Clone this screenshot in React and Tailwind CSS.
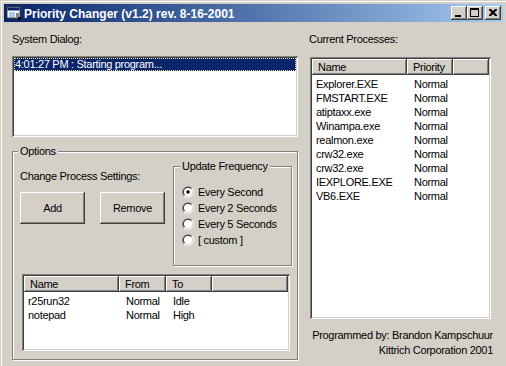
const raised =
  'shadow-[inset_-1px_-1px_0_#404040,inset_1px_1px_0_#ffffff,inset_-2px_-2px_0_#808080]';
const sunken =
  'shadow-[inset_1px_1px_0_#808080,inset_-1px_-1px_0_#ffffff,inset_2px_2px_0_#404040,inset_-2px_-2px_0_#d4d0c8]';
const etched = 'border border-[#808080] shadow-[inset_1px_1px_0_#ffffff,1px_1px_0_#ffffff]';

const processes = [
  'Explorer.EXE',
  'FMSTART.EXE',
  'atiptaxx.exe',
  'Winampa.exe',
  'realmon.exe',
  'crw32.exe',
  'crw32.exe',
  'IEXPLORE.EXE',
  'VB6.EXE',
];

const changes = [
  { name: 'r25run32', from: 'Normal', to: 'Idle' },
  { name: 'notepad', from: 'Normal', to: 'High' },
];

const frequencies = ['Every Second', 'Every 2 Seconds', 'Every 5 Seconds', '[ custom ]'];

function AppIcon() {
  return (
    <svg width="16" height="16" viewBox="0 0 16 16">
      <rect x="1" y="2" width="13" height="11" fill="#ffffff" stroke="#404040" />
      <rect x="1.5" y="2.5" width="12" height="3" fill="#0a246a" />
      <path d="M3 7h6v5H3z" fill="#a6caf0" />
      <path d="M10 8h3v4h-3z" fill="#808080" />
      <rect x="12" y="12" width="3" height="3" fill="#000000" />
    </svg>
  );
}

function CaptionButton({ kind }) {
  return (
    <div className={`flex h-[14px] w-[16px] items-center justify-center bg-[#d4d0c8] ${raised}`}>
      <svg width="16" height="14" viewBox="0 0 16 14">
        {kind === 'min' && <rect x="4" y="9" width="6" height="2" fill="#000" />}
        {kind === 'max' && (
          <>
            <rect x="3.5" y="2.5" width="8" height="8" fill="none" stroke="#000" />
            <rect x="3" y="2" width="9" height="2" fill="#000" />
          </>
        )}
        {kind === 'close' && (
          <path d="M4 3h2l2 2 2-2h2v1l-2.5 2.5L12 9v1h-2L8 8 6 10H4V9l2.5-2.5L4 4z" fill="#000" />
        )}
      </svg>
    </div>
  );
}

function Radio({ checked }) {
  return (
    <svg width="12" height="12" viewBox="0 0 12 12" className="shrink-0">
      <path d="M10.24 1.76A6 6 0 0 0 1.76 10.24Z" fill="#808080" />
      <path d="M10.24 1.76A6 6 0 0 1 1.76 10.24Z" fill="#ffffff" />
      <path d="M9.54 2.46A5 5 0 0 0 2.46 9.54Z" fill="#404040" />
      <path d="M9.54 2.46A5 5 0 0 1 2.46 9.54Z" fill="#d4d0c8" />
      <circle cx="6" cy="6" r="4" fill="#ffffff" />
      {checked && <circle cx="6" cy="6" r="1.8" fill="#000000" />}
    </svg>
  );
}

function Button({ children }) {
  return (
    <div className={`flex h-[32px] w-[65px] items-center justify-center bg-[#d4d0c8] ${raised}`}>
      {children}
    </div>
  );
}

function HeaderCell({ width, children }) {
  return (
    <div
      className={`flex h-[16px] shrink-0 items-center bg-[#d4d0c8] pl-[6px] ${raised}`}
      style={{ width }}
    >
      {children}
    </div>
  );
}

function ListView({ columns, rows, className }) {
  return (
    <div className={`flex flex-col bg-white p-[2px] ${sunken} ${className}`}>
      <div className="flex">
        {columns.map((col) => (
          <HeaderCell key={col.label} width={col.width}>
            {col.label}
          </HeaderCell>
        ))}
        <div className={`h-[16px] flex-1 bg-[#d4d0c8] ${raised}`} />
      </div>
      <div className="pt-[2px]">
        {rows.map((row, i) => (
          <div key={i} className="flex h-[14px] items-center">
            {row.map((cell, j) => (
              <div
                key={j}
                className={`shrink-0 ${j === 0 ? 'pl-[4px]' : 'pl-[7px]'}`}
                style={{ width: columns[j].width }}
              >
                {cell}
              </div>
            ))}
          </div>
        ))}
      </div>
    </div>
  );
}

export default function App() {
  return (
    <div className="h-[366px] w-[506px] overflow-hidden bg-[#d4d0c8] pl-[4px] pr-[3px] pt-[4px] font-['Liberation_Sans',Arial,sans-serif] text-[11px] leading-[13px] tracking-[-0.3px] text-black shadow-[inset_1px_1px_0_#d4d0c8,inset_2px_2px_0_#ffffff]">
      <div className="flex h-[18px] items-center bg-linear-to-r from-[#0a246a] to-[#a6caf0] pl-[2px] pr-[2px]">
        <AppIcon />
        <span className="ml-[2px] pt-[1px] text-[12px] font-bold leading-[14px] tracking-normal text-white">
          Priority Changer (v1.2) rev. 8-16-2001
        </span>
        <div className="ml-auto flex items-center">
          <CaptionButton kind="min" />
          <CaptionButton kind="max" />
          <div className="w-[2px]" />
          <CaptionButton kind="close" />
        </div>
      </div>

      <div className="flex gap-[11px] pl-[8px] pt-[11px]">
        <div className="flex w-[286px] flex-col">
          <div>System Dialog:</div>
          <div className={`mt-[10px] h-[81px] bg-white p-[2px] ${sunken}`}>
            <div className="h-[13px] bg-[#0a246a] pl-[1px] text-white outline-1 -outline-offset-1 outline-dotted outline-[#e8e8a0]">
              4:01:27 PM : Starting program...
            </div>
          </div>

          <fieldset className={`mt-[8px] w-[286px] ${etched}`}>
            <legend className="ml-[5px] bg-[#d4d0c8] px-[2px]">Options</legend>
            <div className="flex items-start">
              <div className="w-[160px] pl-[7px] pt-[12px]">
                <div>Change Process Settings:</div>
                <div className="mt-[9px] flex gap-[15px]">
                  <Button>Add</Button>
                  <Button>Remove</Button>
                </div>
              </div>
              <fieldset className={`mt-[2px] w-[119px] ${etched}`}>
                <legend className="ml-[6px] bg-[#d4d0c8] px-[2px]">Update Frequency</legend>
                <div className="flex flex-col pb-[17px] pl-[8px] pt-[11px]">
                  {frequencies.map((label, i) => (
                    <div key={label} className="flex h-[16px] items-center gap-[4px]">
                      <Radio checked={i === 0} />
                      <span>{label}</span>
                    </div>
                  ))}
                </div>
              </fieldset>
            </div>
            <div className="pb-[8px] pl-[9px] pt-[8px]">
              <ListView
                className="h-[77px] w-[268px]"
                columns={[
                  { label: 'Name', width: 95 },
                  { label: 'From', width: 47 },
                  { label: 'To', width: 46 },
                ]}
                rows={changes.map((c) => [c.name, c.from, c.to])}
              />
            </div>
          </fieldset>
        </div>

        <div className="flex w-[184px] flex-col">
          <div>Current Processes:</div>
          <ListView
            className="ml-[1px] mt-[11px] h-[262px] w-[181px]"
            columns={[
              { label: 'Name', width: 95 },
              { label: 'Priority', width: 46 },
            ]}
            rows={processes.map((p) => [p, 'Normal'])}
          />
          <div className="mt-[9px] text-right leading-[15px]">
            <div>Programmed by: Brandon Kampschuur</div>
            <div>Kittrich Corporation 2001</div>
          </div>
        </div>
      </div>
    </div>
  );
}
